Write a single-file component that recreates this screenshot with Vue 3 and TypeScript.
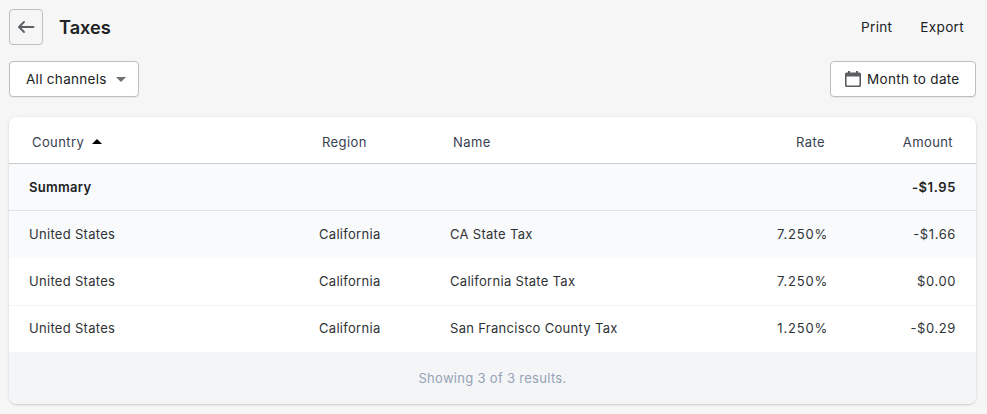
<script setup lang="ts">
interface Row { country: string; region: string; name: string; rate: string; amount: string }
const rows: Row[] = [
  { country: 'United States', region: 'California', name: 'CA State Tax', rate: '7.250%', amount: '-$1.66' },
  { country: 'United States', region: 'California', name: 'California State Tax', rate: '7.250%', amount: '$0.00' },
  { country: 'United States', region: 'California', name: 'San Francisco County Tax', rate: '1.250%', amount: '-$0.29' },
]
</script>

<template>
  <div class="page">
    <header class="top">
      <div class="title-group">
        <button class="back" aria-label="Back">
          <svg width="20" height="20" viewBox="0 0 20 20" fill="none" stroke="#5c5f62" stroke-width="1.8" stroke-linecap="round" stroke-linejoin="round">
            <path d="M17.500 10H3M8 5 3 10l5 5" />
          </svg>
        </button>
        <h1>Taxes</h1>
      </div>
      <div class="actions">
        <span>Print</span>
        <span>Export</span>
      </div>
    </header>
    <div class="filters">
      <button class="btn channels">
        All channels
        <svg class="caret" width="10" height="5" viewBox="0 0 10 5"><path d="M0 0h10L5 5z" fill="#6d7175" /></svg>
      </button>
      <button class="btn date">
        <svg width="16" height="16" viewBox="0 0 16 16" fill="#5c5f62">
          <path fill-rule="evenodd" d="M3 0h2v1.500h6V0h2v1.500h1.500A1.500 1.500 0 0 1 16 3v11.500a1.500 1.500 0 0 1-1.500 1.500h-13A1.500 1.500 0 0 1 0 14.500V3a1.500 1.500 0 0 1 1.500-1.500H3zM1.600 5.500v8.900h12.800V5.500z" />
        </svg>
        Month to date
      </button>
    </div>
    <section class="card">
      <div class="row head">
        <div class="cell sort">Country <i class="asc"></i></div>
        <div class="cell">Region</div>
        <div class="cell name-rate"><span>Name</span><span>Rate</span></div>
        <div class="cell num">Amount</div>
      </div>
      <div class="row summary">
        <div class="cell">Summary</div>
        <div class="cell"></div>
        <div class="cell"></div>
        <div class="cell num amount">-$1.95</div>
      </div>
      <div v-for="(r, i) in rows" :key="r.name" class="row body" :class="{ tinted: i === 0, lined: i === 2 }">
        <div class="cell">{{ r.country }}</div>
        <div class="cell">{{ r.region }}</div>
        <div class="cell name-rate"><span>{{ r.name }}</span><span class="rate">{{ r.rate }}</span></div>
        <div class="cell num amount">{{ r.amount }}</div>
      </div>
      <footer class="foot">Showing 3 of 3 results.</footer>
    </section>
  </div>
</template>

<style>
html, body { margin: 0; background: #f6f6f7; }
</style>

<style scoped>
.page {
  box-sizing: border-box;
  width: 987px;
  height: 414px;
  padding: 9px 11px 0 9px;
  background: #f6f6f7;
  font-family: Inter, "Liberation Sans", sans-serif;
  font-size: 13px;
  letter-spacing: .3px;
  line-height: 20px;
  color: #202223;
  overflow: hidden;
}
.top { display: flex; justify-content: space-between; align-items: center; height: 36px; }
.title-group { display: flex; align-items: center; gap: 16px; }
.back {
  box-sizing: border-box; width: 34px; height: 36px; padding: 0;
  display: flex; align-items: center; justify-content: center;
  background: transparent; border: 1px solid #babfc3; border-radius: 4px;
}
h1 { margin: 0; font-size: 18.200px; line-height: 28px; font-weight: 600; letter-spacing: 0; }
.actions { display: flex; gap: 28px; padding-right: 12px; font-size: 13.600px; letter-spacing: .3px; }
.filters { display: flex; justify-content: space-between; margin-top: 16px; }
.btn {
  box-sizing: border-box; height: 36px; display: flex; align-items: center;
  background: #fff; border: 1px solid #babfc3; border-radius: 4px;
  font: inherit; font-size: 13.500px; letter-spacing: .3px; color: inherit; box-shadow: 0 1px 0 rgba(0, 0, 0, .05);
}
.channels { width: 130px; padding: 0 0 0 16px; gap: 9px; }
.date { width: 146px; padding: 0 0 0 14px; gap: 6px; }
.card {
  margin-top: 20px; height: 287px; background: #fff; border-radius: 8px; overflow: hidden;
  box-shadow: 0 0 5px rgba(23, 24, 24, .05), 0 1px 2px rgba(0, 0, 0, .15);
}
.row {
  box-sizing: border-box; display: grid;
  grid-template-columns: 290px 131px 378px 128px;
  padding: 0 20px; align-items: center;
}
.head { height: 47px; padding-top: 3px; border-bottom: 1px solid #c9cccf; letter-spacing: .4px; }
.head .cell { padding: 0 3px; color: #374151; }
.summary { height: 47px; background: #f9fafb; border-bottom: 1px solid #e1e3e5; font-weight: 600; }
.body { height: 47px; padding-bottom: 2px; color: #303336; }
.tinted { background: #f9fafb; }
.lined { border-top: 1px solid #f1f2f3; }
.name-rate { display: flex; justify-content: space-between; }
.num { text-align: right; }
.rate { letter-spacing: .8px; }
.amount { letter-spacing: .6px; }
.sort { display: flex; align-items: center; gap: 8px; }
.asc {
  width: 0; height: 0; border-left: 5px solid transparent; border-right: 5px solid transparent;
  border-bottom: 5px solid #000; margin-top: -1px;
}
.foot {
  height: 53px; padding-bottom: 2px; box-sizing: border-box; display: flex; align-items: center; justify-content: center;
  background: #f4f5f6; color: #94a3b8; font-size: 13px;
}
</style>
